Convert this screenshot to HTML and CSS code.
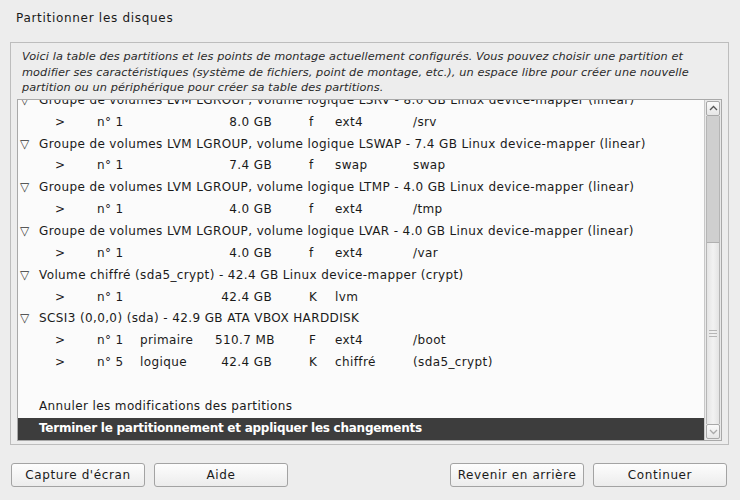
FILE: index.html
```html
<!DOCTYPE html>
<html lang="fr">
<head>
<meta charset="utf-8">
<title>Partitionner les disques</title>
<link rel="stylesheet" href="styles.css">
</head>
<body>
<div class="window">
  <h1 class="title">Partitionner les disques</h1>
  <div class="frame">
    <p class="desc">Voici la table des partitions et les points de montage actuellement configurés. Vous pouvez choisir une partition et modifier ses caractéristiques (système de fichiers, point de montage, etc.), un espace libre pour créer une nouvelle partition ou un périphérique pour créer sa table des partitions.</p>
    <div class="listbox">
      <div class="viewport">
        <ul class="rows">
          <li class="row head"><span class="tri">▽</span>Groupe de volumes LVM LGROUP, volume logique LSRV - 8.0 GB Linux device-mapper (linear)</li>
          <li class="row part"><span class="c-arrow">&gt;</span><span class="c-num">n° 1</span><span class="c-type"></span><span class="c-size">8.0 GB</span><span class="c-flag">f</span><span class="c-fs">ext4</span><span class="c-mnt">/srv</span></li>
          <li class="row head"><span class="tri">▽</span>Groupe de volumes LVM LGROUP, volume logique LSWAP - 7.4 GB Linux device-mapper (linear)</li>
          <li class="row part"><span class="c-arrow">&gt;</span><span class="c-num">n° 1</span><span class="c-type"></span><span class="c-size">7.4 GB</span><span class="c-flag">f</span><span class="c-fs">swap</span><span class="c-mnt">swap</span></li>
          <li class="row head"><span class="tri">▽</span>Groupe de volumes LVM LGROUP, volume logique LTMP - 4.0 GB Linux device-mapper (linear)</li>
          <li class="row part"><span class="c-arrow">&gt;</span><span class="c-num">n° 1</span><span class="c-type"></span><span class="c-size">4.0 GB</span><span class="c-flag">f</span><span class="c-fs">ext4</span><span class="c-mnt">/tmp</span></li>
          <li class="row head"><span class="tri">▽</span>Groupe de volumes LVM LGROUP, volume logique LVAR - 4.0 GB Linux device-mapper (linear)</li>
          <li class="row part"><span class="c-arrow">&gt;</span><span class="c-num">n° 1</span><span class="c-type"></span><span class="c-size">4.0 GB</span><span class="c-flag">f</span><span class="c-fs">ext4</span><span class="c-mnt">/var</span></li>
          <li class="row head"><span class="tri">▽</span>Volume chiffré (sda5_crypt) - 42.4 GB Linux device-mapper (crypt)</li>
          <li class="row part"><span class="c-arrow">&gt;</span><span class="c-num">n° 1</span><span class="c-type"></span><span class="c-size">42.4 GB</span><span class="c-flag">K</span><span class="c-fs">lvm</span><span class="c-mnt"></span></li>
          <li class="row head"><span class="tri">▽</span>SCSI3 (0,0,0) (sda) - 42.9 GB ATA VBOX HARDDISK</li>
          <li class="row part"><span class="c-arrow">&gt;</span><span class="c-num">n° 1</span><span class="c-type">primaire</span><span class="c-size">510.7 MB</span><span class="c-flag">F</span><span class="c-fs">ext4</span><span class="c-mnt">/boot</span></li>
          <li class="row part"><span class="c-arrow">&gt;</span><span class="c-num">n° 5</span><span class="c-type">logique</span><span class="c-size">42.4 GB</span><span class="c-flag">K</span><span class="c-fs">chiffré</span><span class="c-mnt">(sda5_crypt)</span></li>
          <li class="row blank"></li>
          <li class="row action">Annuler les modifications des partitions</li>
          <li class="row action selected">Terminer le partitionnement et appliquer les changements</li>
        </ul>
      </div>
      <div class="scrollbar">
        <div class="sb-btn sb-up"><svg width="9" height="6" viewBox="0 0 9 6"><path d="M1 5 L4.5 1.5 L8 5" fill="none" stroke="#555" stroke-width="1.3"/></svg></div>
        <div class="sb-trough">
          <div class="sb-thumb"><span class="grip"></span></div>
        </div>
        <div class="sb-btn sb-down"><svg width="9" height="6" viewBox="0 0 9 6"><path d="M1 1 L4.5 4.5 L8 1" fill="none" stroke="#aaa" stroke-width="1.3"/></svg></div>
      </div>
    </div>
  </div>
  <div class="buttons">
    <div class="group">
      <button class="btn">Capture d'écran</button>
      <button class="btn">Aide</button>
    </div>
    <div class="group">
      <button class="btn">Revenir en arrière</button>
      <button class="btn">Continuer</button>
    </div>
  </div>
</div>
</body>
</html>
```

FILE: styles.css
```css
* { box-sizing: border-box; }
html, body {
  margin: 0;
  padding: 0;
  background: #ededed;
}
body {
  width: 740px;
  height: 500px;
  overflow: hidden;
  font-family: "DejaVu Sans", "Liberation Sans", sans-serif;
  font-size: 12px;
  color: #1a1a1a;
}
.window {
  display: flex;
  flex-direction: column;
  height: 500px;
}
.title {
  margin: 0;
  padding: 11px 0 0 16px;
  height: 42px;
  font-size: 12px;
  font-weight: normal;
  line-height: 15px;
  letter-spacing: 0.7px;
  color: #1a1a1a;
}
.frame {
  margin: 0 11px 0 10px;
  border: 1px solid #bdbdbd;
  padding: 6px 6px 3px 6px;
  height: 403px;
  display: flex;
  flex-direction: column;
}
.desc {
  margin: 0 0 0 5px;
  font-style: italic;
  font-size: 11.3px;
  line-height: 15.6px;
  letter-spacing: 0.1px;
  color: #2a2a2a;
}
.listbox {
  margin-top: 3px;
  flex: 1;
  display: flex;
  border: 1px solid #a9a9a9;
  background: #fbfbfb;
  min-height: 0;
}
.viewport {
  flex: 1;
  overflow: hidden;
  position: relative;
}
.rows {
  list-style: none;
  margin: -10px 0 0 0;
  padding: 0;
}
.row {
  height: 21.86px;
  line-height: 21.86px;
  white-space: nowrap;
  display: flex;
  align-items: center;
  letter-spacing: 0.38px;
}
.head { padding-left: 2px; }
.tri {
  display: inline-block;
  width: 19px;
  font-size: 12px;
  letter-spacing: 0;
  color: #333;
}
.part > span { display: inline-block; }
.c-arrow { width: 79px; padding-left: 37px; }
.c-num { width: 43px; }
.c-type { width: 75px; }
.c-size { width: 57px; text-align: right; }
.c-flag { width: 63px; padding-left: 37px; }
.c-fs { width: 78px; }
.action { padding-left: 21px; }
.selected {
  background: #3d3d3d;
  color: #ffffff;
  font-weight: bold;
  letter-spacing: -0.25px;
}
.scrollbar {
  width: 17px;
  display: flex;
  flex-direction: column;
  border-left: 1px solid #c8c8c8;
  padding: 1px;
  background: #e9e9e9;
}
.sb-btn {
  height: 15px;
  display: flex;
  align-items: center;
  justify-content: center;
  background: linear-gradient(#fafafa, #e6e6e6);
  border: 1px solid #a8a8a8;
  border-radius: 2px;
}
.sb-trough {
  flex: 1;
  display: flex;
  flex-direction: column;
  justify-content: flex-end;
  background: #cfcfcf;
  border-left: 1px solid #b5b5b5;
  border-right: 1px solid #b5b5b5;
}
.sb-thumb {
  height: 182px;
  background: linear-gradient(90deg, #e4e4e4, #f2f2f2 50%, #e4e4e4);
  border-top: 1px solid #b0b0b0;
  display: flex;
  align-items: center;
  justify-content: center;
}
.grip {
  width: 8px;
  height: 7px;
  border-top: 1px solid #b5b5b5;
  border-bottom: 1px solid #b5b5b5;
  position: relative;
}
.grip::after {
  content: "";
  position: absolute;
  left: 0;
  right: 0;
  top: 2px;
  border-top: 1px solid #b5b5b5;
}
.buttons {
  display: flex;
  justify-content: space-between;
  padding: 18px 13px 0 11px;
}
.group {
  display: flex;
  gap: 9px;
}
.btn {
  width: 134px;
  height: 24px;
  font-family: "DejaVu Sans", "Liberation Sans", sans-serif;
  font-size: 12px;
  letter-spacing: 0.6px;
  color: #1a1a1a;
  background: linear-gradient(#fdfdfd, #ececec);
  border: 1px solid #a3a3a3;
  border-radius: 3px;
  padding: 0;
}
```
